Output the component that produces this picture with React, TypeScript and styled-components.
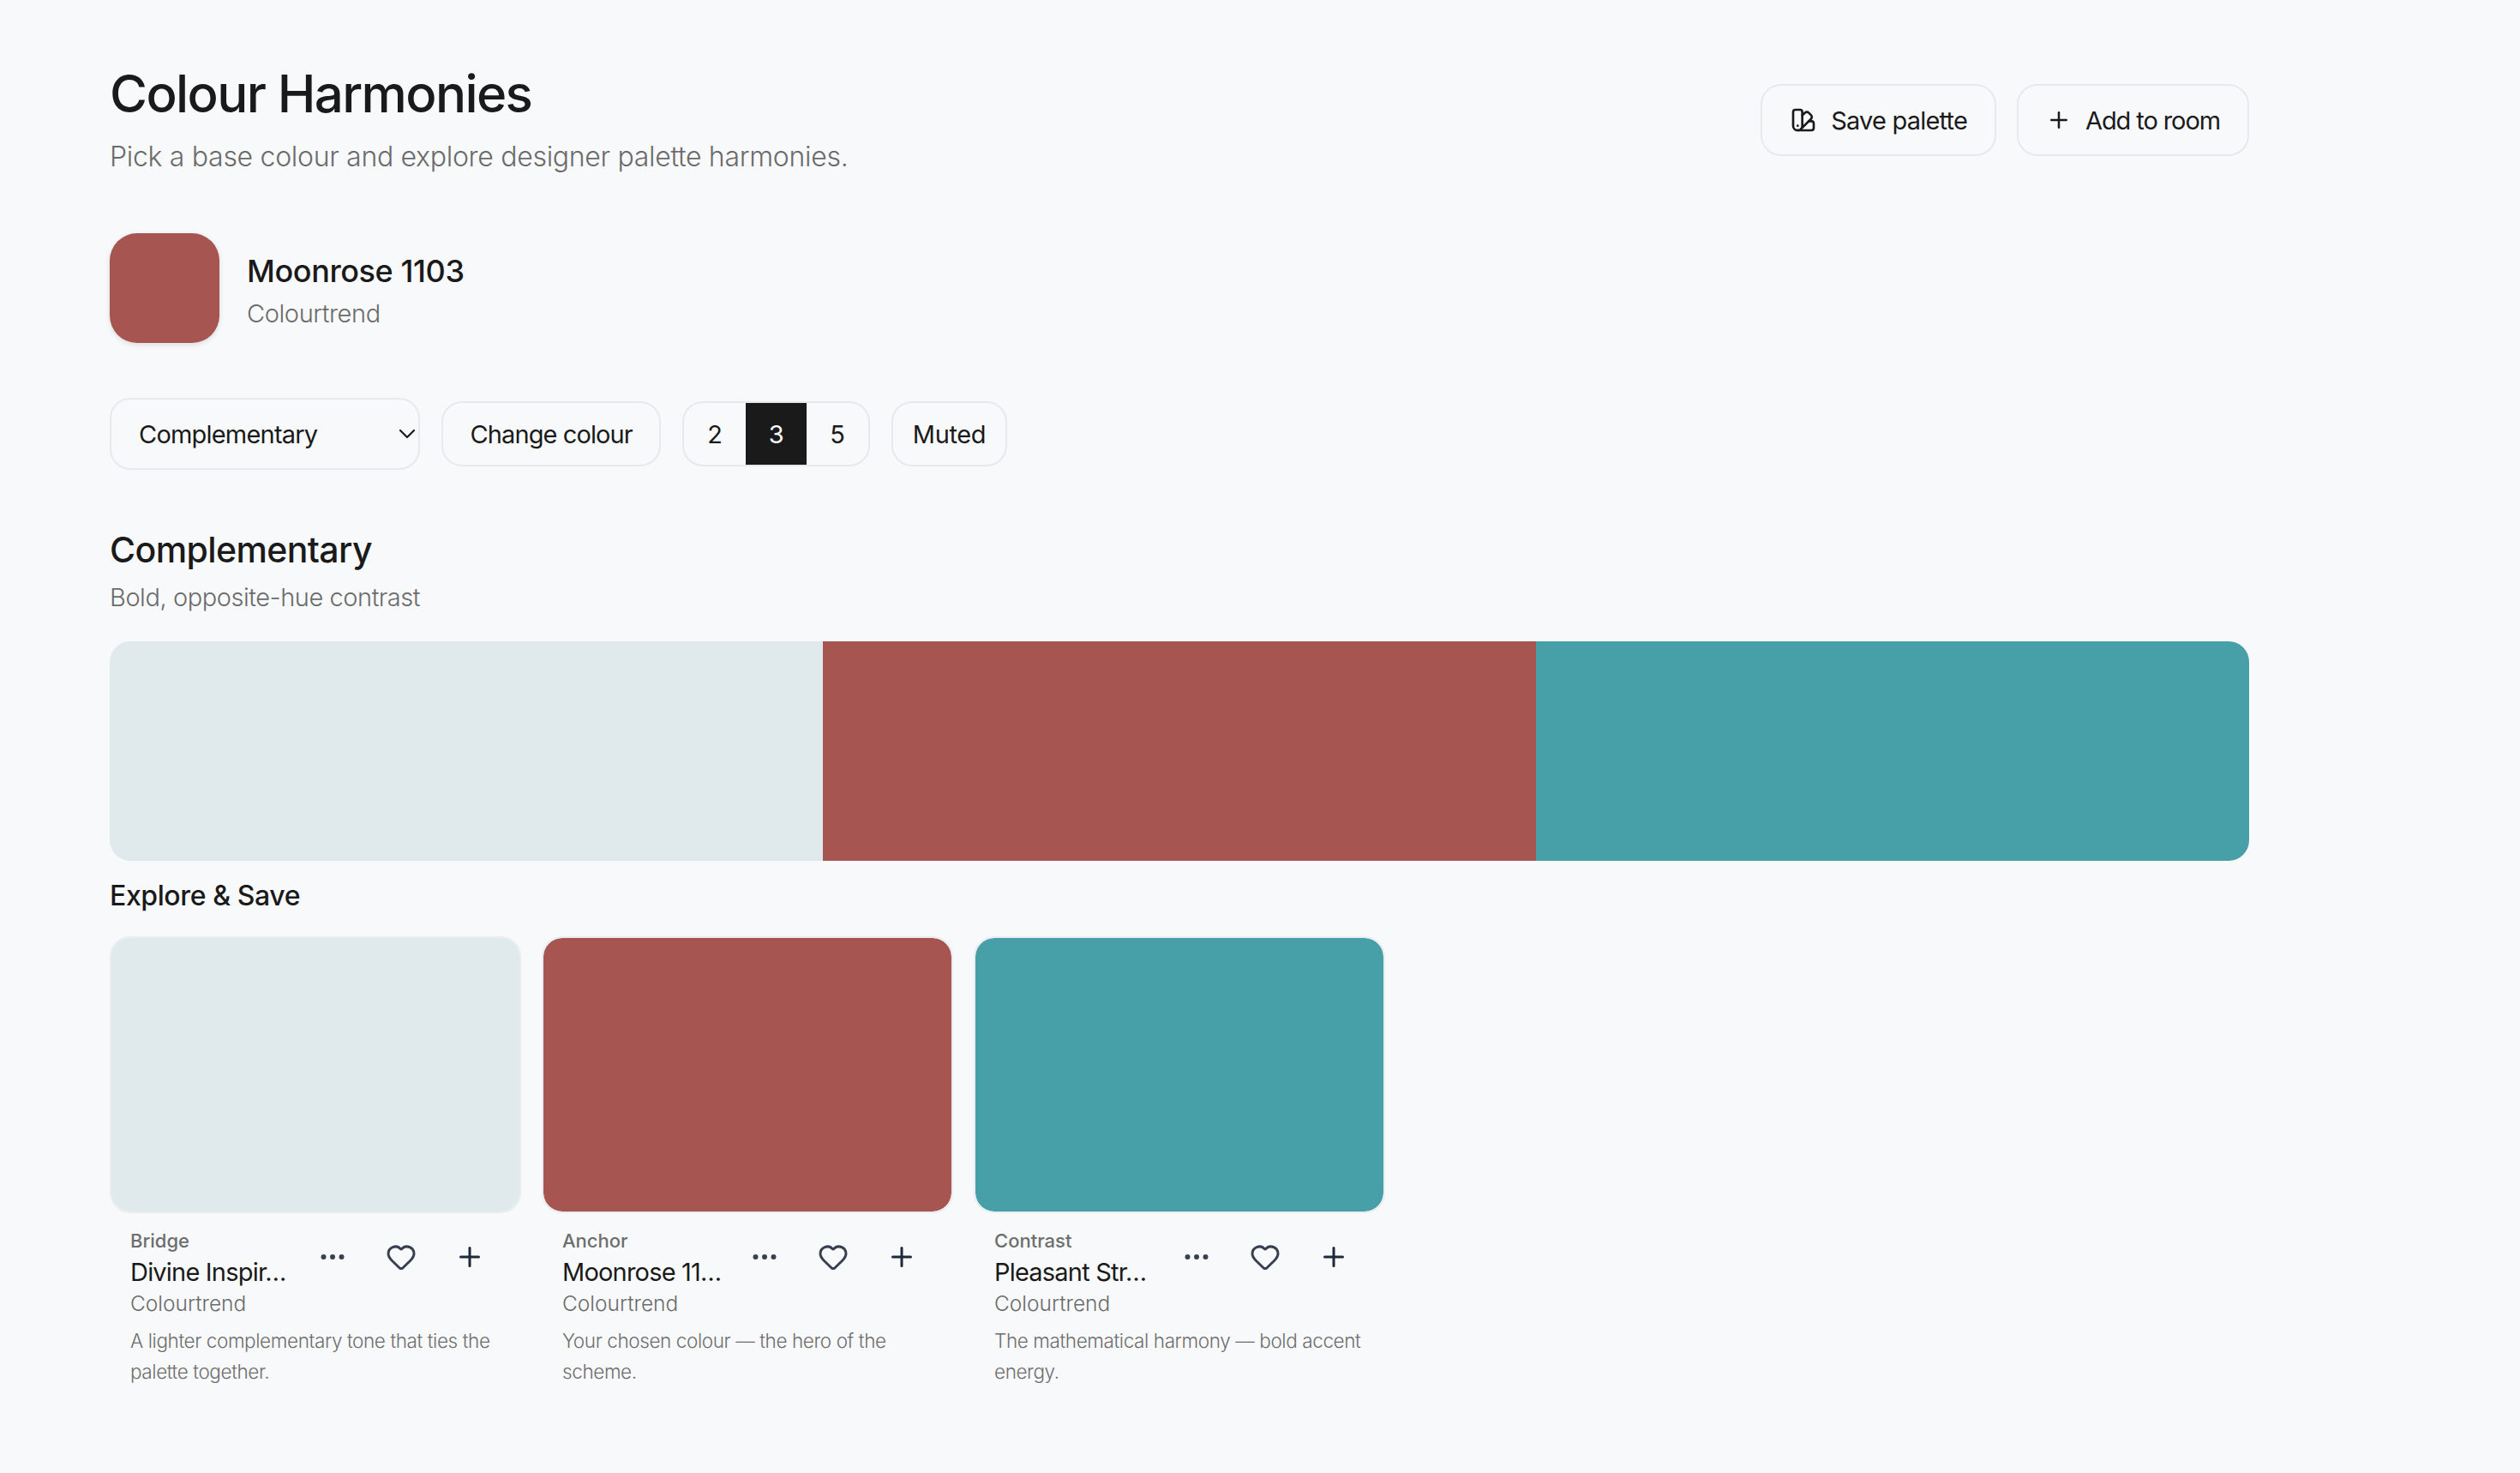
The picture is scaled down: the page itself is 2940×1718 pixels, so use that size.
import React from "react";
import styled, { createGlobalStyle } from "styled-components";
import { SwatchBook, Plus, Heart, Ellipsis, ChevronDown } from "lucide-react";

const Global = createGlobalStyle`
  html, body { margin: 0; padding: 0; background: #f8f9fb; }
  body { font-family: "Inter", "Noto Sans", sans-serif; color: #1a1a1a; }
  * { box-sizing: border-box; }
`;

const Page = styled.div`
  width: 2940px;
  height: 1718px;
  padding: 76px 316px 0 128px;
  background: #f8f9fb;
  overflow: hidden;
`;
const Header = styled.header`
  display: flex;
  justify-content: space-between;
  align-items: flex-start;
`;
const Title = styled.h1`
  margin: 0;
  font-size: 60px;
  line-height: 66px;
  font-weight: 500;
  letter-spacing: -1.6px;
`;
const Subtitle = styled.p`
  margin: 20px 0 0;
  font-size: 32px;
  line-height: 42px;
  font-weight: 300;
  color: #6b6b6b;
  letter-spacing: -0.3px;
`;
const HeaderActions = styled.div`
  display: flex;
  gap: 24px;
  margin-top: 22px;
`;
const OutlineButton = styled.button<{ $tight?: boolean }>`
  display: flex;
  align-items: center;
  gap: 16px;
  height: 84px;
  padding: 0 32px;
  border: 2px solid #e7e9ec;
  border-radius: 24px;
  background: transparent;
  color: #1a1a1a;
  font: 400 29px "Inter", sans-serif;
  letter-spacing: ${(p) => (p.$tight ? "-1.1px" : "-0.8px")};
`;
const BaseRow = styled.div`
  display: flex;
  align-items: center;
  gap: 32px;
  margin-top: 68px;
`;
const BaseSwatch = styled.div`
  width: 128px;
  height: 128px;
  border-radius: 32px;
  background: #a75551;
  box-shadow: 0 2px 6px rgba(0, 0, 0, 0.12);
`;
const BaseText = styled.div`
  padding-top: 6px;
`;
const BaseName = styled.div`
  font-size: 36px;
  line-height: 46px;
  font-weight: 500;
  letter-spacing: -0.4px;
`;
const BaseBrand = styled.div`
  margin-top: 8px;
  font-size: 29px;
  line-height: 38px;
  font-weight: 300;
  color: #6b6b6b;
  letter-spacing: -0.4px;
`;
const Controls = styled.div`
  display: flex;
  align-items: center;
  gap: 25px;
  margin-top: 64px;
`;
const SelectWrap = styled.div`
  position: relative;
  width: 362px;
  height: 84px;
`;
const Select = styled.select`
  appearance: none;
  width: 100%;
  height: 100%;
  padding: 0 32px;
  border: 2px solid #e7e9ec;
  border-radius: 24px;
  background: transparent;
  color: #1a1a1a;
  font: 400 29px "Inter", sans-serif;
  letter-spacing: -0.8px;
`;
const SelectArrow = styled.span`
  position: absolute;
  right: -1px;
  top: 26px;
  display: flex;
  pointer-events: none;
`;
const ControlButton = styled.button`
  height: 76px;
  padding: 0 31.5px;
  border: 2px solid #e7e9ec;
  border-radius: 24px;
  background: transparent;
  color: #1a1a1a;
  font: 400 29px "Inter", sans-serif;
  letter-spacing: -0.9px;
`;
const MutedButton = styled(ControlButton)`
  padding: 0 23px;
  letter-spacing: -0.4px;
`;
const Segmented = styled.div`
  display: flex;
  height: 76px;
  border: 2px solid #e7e9ec;
  border-radius: 24px;
  overflow: hidden;
`;
const Segment = styled.button<{ $active?: boolean }>`
  width: 71.5px;
  padding: 0;
  border: 0;
  background: ${(p) => (p.$active ? "#1a1a1a" : "transparent")};
  color: ${(p) => (p.$active ? "#ffffff" : "#1a1a1a")};
  font: 400 29px "Inter", sans-serif;
`;
const SectionTitle = styled.h2`
  margin: 68px 0 0;
  font-size: 41px;
  line-height: 50px;
  font-weight: 500;
  letter-spacing: -0.6px;
`;
const SectionSub = styled.p`
  margin: 12px 0 0;
  font-size: 29px;
  line-height: 38px;
  font-weight: 300;
  color: #6b6b6b;
  letter-spacing: -0.45px;
`;
const Bar = styled.div`
  display: flex;
  height: 256px;
  margin-top: 32px;
  border-radius: 24px;
  overflow: hidden;
`;
const BarPart = styled.div<{ $color: string }>`
  flex: 1;
  background: ${(p) => p.$color};
`;
const ExploreTitle = styled.h3`
  margin: 23px 0 0;
  font-size: 32px;
  line-height: 36px;
  font-weight: 500;
  letter-spacing: -0.4px;
`;
const Cards = styled.div`
  display: flex;
  gap: 24px;
  margin-top: 29px;
`;
const Card = styled.article`
  width: 480px;
`;
const CardSwatch = styled.div<{ $color: string }>`
  height: 323px;
  border-radius: 24px;
  background: ${(p) => p.$color};
  background-clip: padding-box;
  border: 2px solid #e9edf0;
`;
const CardBody = styled.div`
  padding: 17px 24px 0;
`;
const CardTop = styled.div`
  display: flex;
  align-items: center;
  justify-content: space-between;
`;
const CardInfo = styled.div`
  width: 184px;
  min-width: 0;
`;
const CardRole = styled.div`
  margin-bottom: 3px;
  font-size: 22px;
  line-height: 30px;
  font-weight: 500;
  color: #6e6e6e;
`;
const CardName = styled.div`
  font-size: 29px;
  line-height: 38px;
  font-weight: 400;
  letter-spacing: -0.8px;
  white-space: nowrap;
`;
const CardActions = styled.div`
  display: flex;
  align-items: center;
  gap: 44px;
  margin: 0 18px 3px 0;
`;
const IconBtn = styled.span<{ $color: string }>`
  display: flex;
  color: ${(p) => p.$color};
`;
const CardBrand = styled.div`
  font-size: 24.5px;
  line-height: 34px;
  font-weight: 300;
  color: #6b6b6b;
`;
const CardNote = styled.p`
  margin: 9px 0 0;
  font-size: 22.5px;
  line-height: 36px;
  font-weight: 300;
  color: #6e6e6e;
  letter-spacing: -0.4px;
`;

const ROSE = "#a75551";
const TEAL = "#47a0a8";
const MIST = "#e0e9eb";

const cards = [
  { color: MIST, role: "Bridge", name: "Divine Inspir…", note: "A lighter complementary tone that ties the palette together." },
  { color: ROSE, role: "Anchor", name: "Moonrose 11…", note: "Your chosen colour — the hero of the scheme." },
  { color: TEAL, role: "Contrast", name: "Pleasant Str…", note: "The mathematical harmony — bold accent energy." },
];

export default function App() {
  return (
    <Page>
      <Global />
      <Header>
        <div>
          <Title>Colour Harmonies</Title>
          <Subtitle>Pick a base colour and explore designer palette harmonies.</Subtitle>
        </div>
        <HeaderActions>
          <OutlineButton><SwatchBook size={32} strokeWidth={2} />Save palette</OutlineButton>
          <OutlineButton $tight><Plus size={30} strokeWidth={2} />Add to room</OutlineButton>
        </HeaderActions>
      </Header>
      <BaseRow>
        <BaseSwatch />
        <BaseText>
          <BaseName>Moonrose 1103</BaseName>
          <BaseBrand>Colourtrend</BaseBrand>
        </BaseText>
      </BaseRow>
      <Controls>
        <SelectWrap>
          <Select defaultValue="Complementary">
            <option>Complementary</option>
          </Select>
          <SelectArrow><ChevronDown size={32} strokeWidth={1.6} /></SelectArrow>
        </SelectWrap>
        <ControlButton>Change colour</ControlButton>
        <Segmented>
          <Segment>2</Segment>
          <Segment $active>3</Segment>
          <Segment>5</Segment>
        </Segmented>
        <MutedButton>Muted</MutedButton>
      </Controls>
      <SectionTitle>Complementary</SectionTitle>
      <SectionSub>Bold, opposite-hue contrast</SectionSub>
      <Bar>
        <BarPart $color={MIST} />
        <BarPart $color={ROSE} />
        <BarPart $color={TEAL} />
      </Bar>
      <ExploreTitle>Explore &amp; Save</ExploreTitle>
      <Cards>
        {cards.map((c) => (
          <Card key={c.role}>
            <CardSwatch $color={c.color} />
            <CardBody>
              <CardTop>
                <CardInfo>
                  <CardRole>{c.role}</CardRole>
                  <CardName>{c.name}</CardName>
                </CardInfo>
                <CardActions>
                  <IconBtn $color="#374151"><Ellipsis size={36} strokeWidth={2} /></IconBtn>
                  <IconBtn $color="#374151"><Heart size={36} strokeWidth={2} /></IconBtn>
                  <IconBtn $color="#1e293b"><Plus size={36} strokeWidth={2} /></IconBtn>
                </CardActions>
              </CardTop>
              <CardBrand>Colourtrend</CardBrand>
              <CardNote>{c.note}</CardNote>
            </CardBody>
          </Card>
        ))}
      </Cards>
    </Page>
  );
}
